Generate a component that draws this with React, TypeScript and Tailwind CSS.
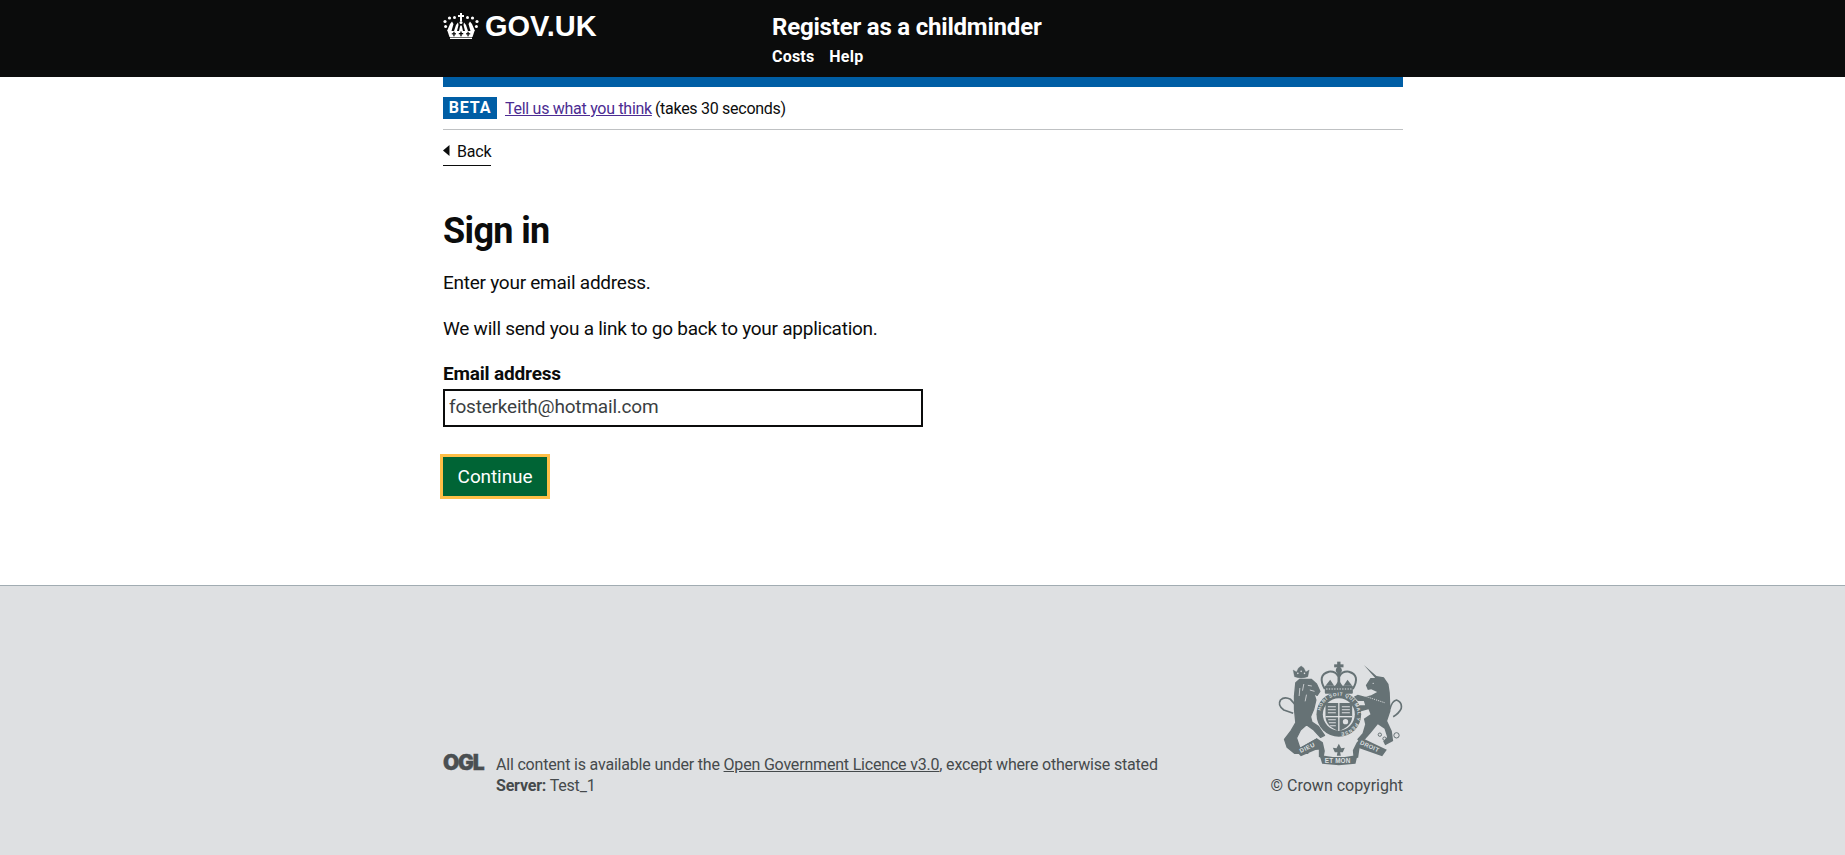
const Crown = () => (
  <svg width="36" height="26" viewBox="0 0 36 26" fill="#fff" className="block">
    <rect x="17" y="0" width="2" height="8" />
    <rect x="15" y="2" width="6" height="2" />
    <circle cx="18" cy="9.5" r="1.5" />
    <circle cx="11.5" cy="4.5" r="1.5" /><circle cx="24.5" cy="4.5" r="1.5" />
    <circle cx="6.5" cy="5" r="1.6" /><circle cx="29.5" cy="5" r="1.6" />
    <circle cx="2" cy="8.5" r="1.6" /><circle cx="34" cy="8.5" r="1.6" />
    <circle cx="2.6" cy="13.5" r="1.5" /><circle cx="33.4" cy="13.5" r="1.5" />
    <path d="M4 18 L7 11 L9 8.5 L10.5 11 L9.5 14.5 L8.5 18 Z M27.5 18 L26.5 14.5 L25.5 11 L27 8.5 L29 11 L32 18 Z M11 18 L13 12 L15 9.5 L15.5 12 L14 18 Z M22 18 L20.5 12 L21 9.5 L23 12 L25 18 Z M16 18 L17 13.5 L18 12 L19 13.5 L20 18 Z" />
    <path d="M4.5 18 H31.5 L29.5 24 H6.5 Z" />
    <rect x="7" y="24.6" width="22" height="1.4" />
    <g fill="#0b0c0c">
      <rect x="17.3" y="18.5" width="1.4" height="4.8" /><rect x="15.8" y="20" width="4.4" height="1.3" />
      <rect x="10.3" y="18.8" width="1.3" height="4.5" /><rect x="8.8" y="20.2" width="4.2" height="1.2" />
      <rect x="24.4" y="18.8" width="1.3" height="4.5" /><rect x="23" y="20.2" width="4.2" height="1.2" />
    </g>
  </svg>
);

const C = "#667275";
const B = "#dee0e2";

const Crest = () => (
  <svg width="127" height="105" viewBox="50 30 380 315" className="block">
    <defs>
      <path id="garter" d="M182 190 A56 56 0 1 1 294 190 A56 56 0 1 1 182 190" />
    </defs>
    {/* lion */}
    <g transform="translate(45 15)" fill={C} stroke={C} strokeWidth="4" strokeLinejoin="round">
      <path d="M60 62 L56 42 L66 48 L72 36 L80 30 L88 36 L94 48 L104 42 L100 62 Q80 70 60 62 Z" strokeWidth="1" />
      <g fill={B} stroke="none">
        <circle cx="70" cy="52" r="2.4" /><circle cx="80" cy="46" r="2.4" /><circle cx="90" cy="52" r="2.4" />
      </g>
      <path d="M64 80 L76 70 L110 70 L126 84 L136 106 L128 118 L118 112 L124 132 L118 158 L108 182 L112 198 L132 212 L150 238 L138 244 L118 222 L96 206 L78 222 L66 246 L76 276 L100 282 L100 292 L60 292 L38 274 L30 250 L50 224 L64 200 L60 160 L60 120 Z" />
      <path d="M62 146 L48 130 Q30 120 18 132 Q8 148 28 162 L56 172" fill="none" strokeWidth="5" />
      <g fill="none" stroke={B} strokeWidth="2.4">
        <path d="M100 88 L112 90 M106 102 L120 106 M88 84 L84 104 M76 96 L74 120 M96 116 L92 136" />
      </g>
    </g>
    {/* unicorn */}
    <g transform="translate(225 15)" fill={C}>
      <path d="M88 27 L126 60 L148 64 L162 84 L166 110 L168 165 L158 195 L172 225 L176 255 L152 268 L146 256 L158 244 L150 218 L130 205 L108 232 L92 250 L74 258 L68 250 L84 232 L92 205 L88 188 L108 175 L102 160 L72 168 L60 160 L76 148 L92 148 L88 135 L70 135 L58 122 L70 116 L92 122 L110 118 L128 108 L110 100 L100 102 L94 88 L108 66 L122 66 Z" />
      <path d="M166 160 Q172 135 186 132 Q204 138 200 158 Q194 172 176 182" fill="none" stroke={C} strokeWidth="5" />
      <path d="M96 122 L150 140" fill="none" stroke={B} strokeWidth="3" strokeDasharray="3 3" />
      <circle cx="116" cy="82" r="2" fill={B} />
      <g fill="none" stroke={C} strokeWidth="3">
        <circle cx="136" cy="236" r="5" /><circle cx="150" cy="248" r="5" /><circle cx="162" cy="248" r="5" /><circle cx="186" cy="238" r="8" />
      </g>
    </g>
    {/* main crown */}
    <g fill="none" stroke={C} strokeWidth="6">
      <path d="M196 114 Q172 72 208 62 Q228 60 236 76" />
      <path d="M280 114 Q304 72 268 62 Q248 60 240 76" />
    </g>
    <g fill={C}>
      <rect x="233" y="32" width="10" height="40" />
      <rect x="224" y="40" width="28" height="9" />
      <circle cx="238" cy="58" r="9" />
      <rect x="234" y="70" width="8" height="40" />
      <path d="M198 104 L212 86 L224 104 Z M226 106 L238 88 L250 106 Z M252 104 L264 86 L278 104 Z" />
      <rect x="196" y="104" width="84" height="24" rx="3" />
    </g>
    <path d="M200 114 H276" stroke={B} strokeWidth="3" strokeDasharray="4 4" />
    {/* garter and shield */}
    <circle cx="238" cy="190" r="67" fill={C} />
    <circle cx="238" cy="190" r="48" fill={B} />
    <text fill={B} fontFamily="Liberation Sans, sans-serif" fontWeight="700" fontSize="14" letterSpacing="2">
      <textPath href="#garter" startOffset="3%">HONI SOIT QUI MAL Y PENSE</textPath>
    </text>
    <path d="M198 156 H278 V196 Q278 226 238 240 Q198 226 198 196 Z" fill={C} />
    <g fill={B}>
      <rect x="236" y="156" width="4" height="84" /><rect x="198" y="195" width="80" height="4" />
      <path d="M205 166 H229 V169 H205 Z M205 175 H229 V178 H205 Z M205 184 H229 V187 H205 Z M247 166 H271 V169 H247 Z M247 175 H271 V178 H247 Z M247 184 H271 V187 H247 Z M206 205 H229 V208 H206 Z M208 214 H229 V217 H208 Z M212 223 H229 V226 H212 Z" />
      <circle cx="258" cy="212" r="8" />
    </g>
    {/* ribbons */}
    <g fill={C}>
      <path d="M108 298 L172 262 L190 274 L196 300 L192 322 L178 318 L178 296 Z" />
      <path d="M108 298 L124 316 L180 292 L172 262 Z" />
      <path d="M292 274 L306 260 L382 296 L368 316 L300 292 L296 320 L282 322 L280 298 Z" />
      <path d="M180 312 L220 318 L256 318 L294 312 L288 338 L238 343 L188 338 Z" />
      <path d="M238 278 L245 292 L256 290 L250 304 L242 304 L244 314 L232 314 L234 304 L226 304 L220 290 L231 292 Z" />
    </g>
    <g fill={B} fontFamily="Liberation Sans, sans-serif" fontWeight="700" fontSize="18">
      <text x="124" y="306" transform="rotate(-26 124 306)" letterSpacing="1.5">DIEU</text>
      <text x="196" y="335" fontSize="19" letterSpacing="0.5">ET MON</text>
      <text x="300" y="279" transform="rotate(24 300 279)" letterSpacing="1">DROIT</text>
    </g>
  </svg>
);

export default function App() {
  return (
    <div className="min-h-screen flex flex-col bg-white text-[#0b0c0c] font-['Roboto',sans-serif]">
      <header className="h-[77px] bg-[#0b0c0c] text-white">
        <div className="w-[960px] ml-[443px] flex">
          <div className="w-[329px] flex items-center gap-[6px] h-[52px] font-['Liberation_Sans',sans-serif] font-bold text-[29px] leading-none">
            <Crown />
            <span>GOV.UK</span>
          </div>
          <div className="pt-[11px]">
            <div className="text-[24px] leading-[32px] font-bold tracking-[-0.2px]">Register as a childminder</div>
            <nav className="flex gap-[15px] text-[16px] leading-[20px] font-bold mt-[4px] tracking-[0.2px]">
              <span>Costs</span>
              <span>Help</span>
            </nav>
          </div>
        </div>
      </header>
      <main className="flex-1 w-[960px] ml-[443px]">
        <div className="h-[10px] bg-[#005ea5]" />
        <div className="flex items-center h-[43px] border-b border-[#bfc1c3] text-[16px] tracking-[-0.28px]">
          <span className="bg-[#005ea5] text-white font-bold h-[22px] w-[54px] flex items-center justify-center tracking-[0.8px] mr-[8px]">BETA</span>
          <a className="text-[#4c2c92] underline mr-[3px] pt-[2px]">Tell us what you think</a>
          <span className="pt-[2px]">(takes 30 seconds)</span>
        </div>
        <a className="inline-flex items-center mt-[9px] h-[27px] border-b border-[#0b0c0c] text-[16px] gap-[7px] leading-[24px] tracking-[-0.2px]">
          <svg width="7" height="11" viewBox="0 0 7 11" fill="#0b0c0c" className="block mb-[3px]"><path d="M6.5 0 V11 L0 5.5 Z" /></svg>
          <span>Back</span>
        </a>
        <h1 className="text-[36px] leading-[40px] font-bold mt-[45px] tracking-[-0.65px]">Sign in</h1>
        <div className="text-[19px] leading-[25px] tracking-[-0.25px]">
          <p className="mt-[19px]">Enter your email address.</p>
          <p className="mt-[21px]">We will send you a link to go back to your application.</p>
          <label className="block font-bold mt-[20px] tracking-[-0.18px]">Email address</label>
        </div>
        <div className="w-[480px] h-[38px] mt-[3px] border-2 border-[#0b0c0c] flex items-center px-[4px] pb-[2px] text-[19px] text-[#3b3f42] tracking-[-0.2px]">fosterkeith@hotmail.com</div>
        <button className="block -ml-[3px] mt-[27px] h-[45px] w-[110px] border-[3px] border-[#ffbf47] bg-[#006435] pt-[2px] text-white text-[19px] tracking-[-0.1px]">Continue</button>
      </main>
      <footer className="h-[270px] bg-[#dee0e2] border-t border-[#a1acb2] text-[#454a4c] text-[16px] leading-[21px]">
        <div className="w-[960px] h-full ml-[443px] flex justify-between items-end pb-[59px]">
          <div className="flex">
            <span className="w-[53px] font-['Inter',sans-serif] font-black text-[#4a4f51] text-[21px] leading-[21px] tracking-[-1.2px] -mt-[2px] [-webkit-text-stroke:0.4px_#4a4f51]">OGL</span>
            <div className="tracking-[-0.19px]">
              <div>All content is available under the <a className="underline">Open Government Licence v3.0</a>, except where otherwise stated</div>
              <div><span className="font-bold">Server:</span> Test_1</div>
            </div>
          </div>
          <div className="flex flex-col items-end">
            <Crest />
            <div className="mt-[9px]">© Crown copyright</div>
          </div>
        </div>
      </footer>
    </div>
  );
}
